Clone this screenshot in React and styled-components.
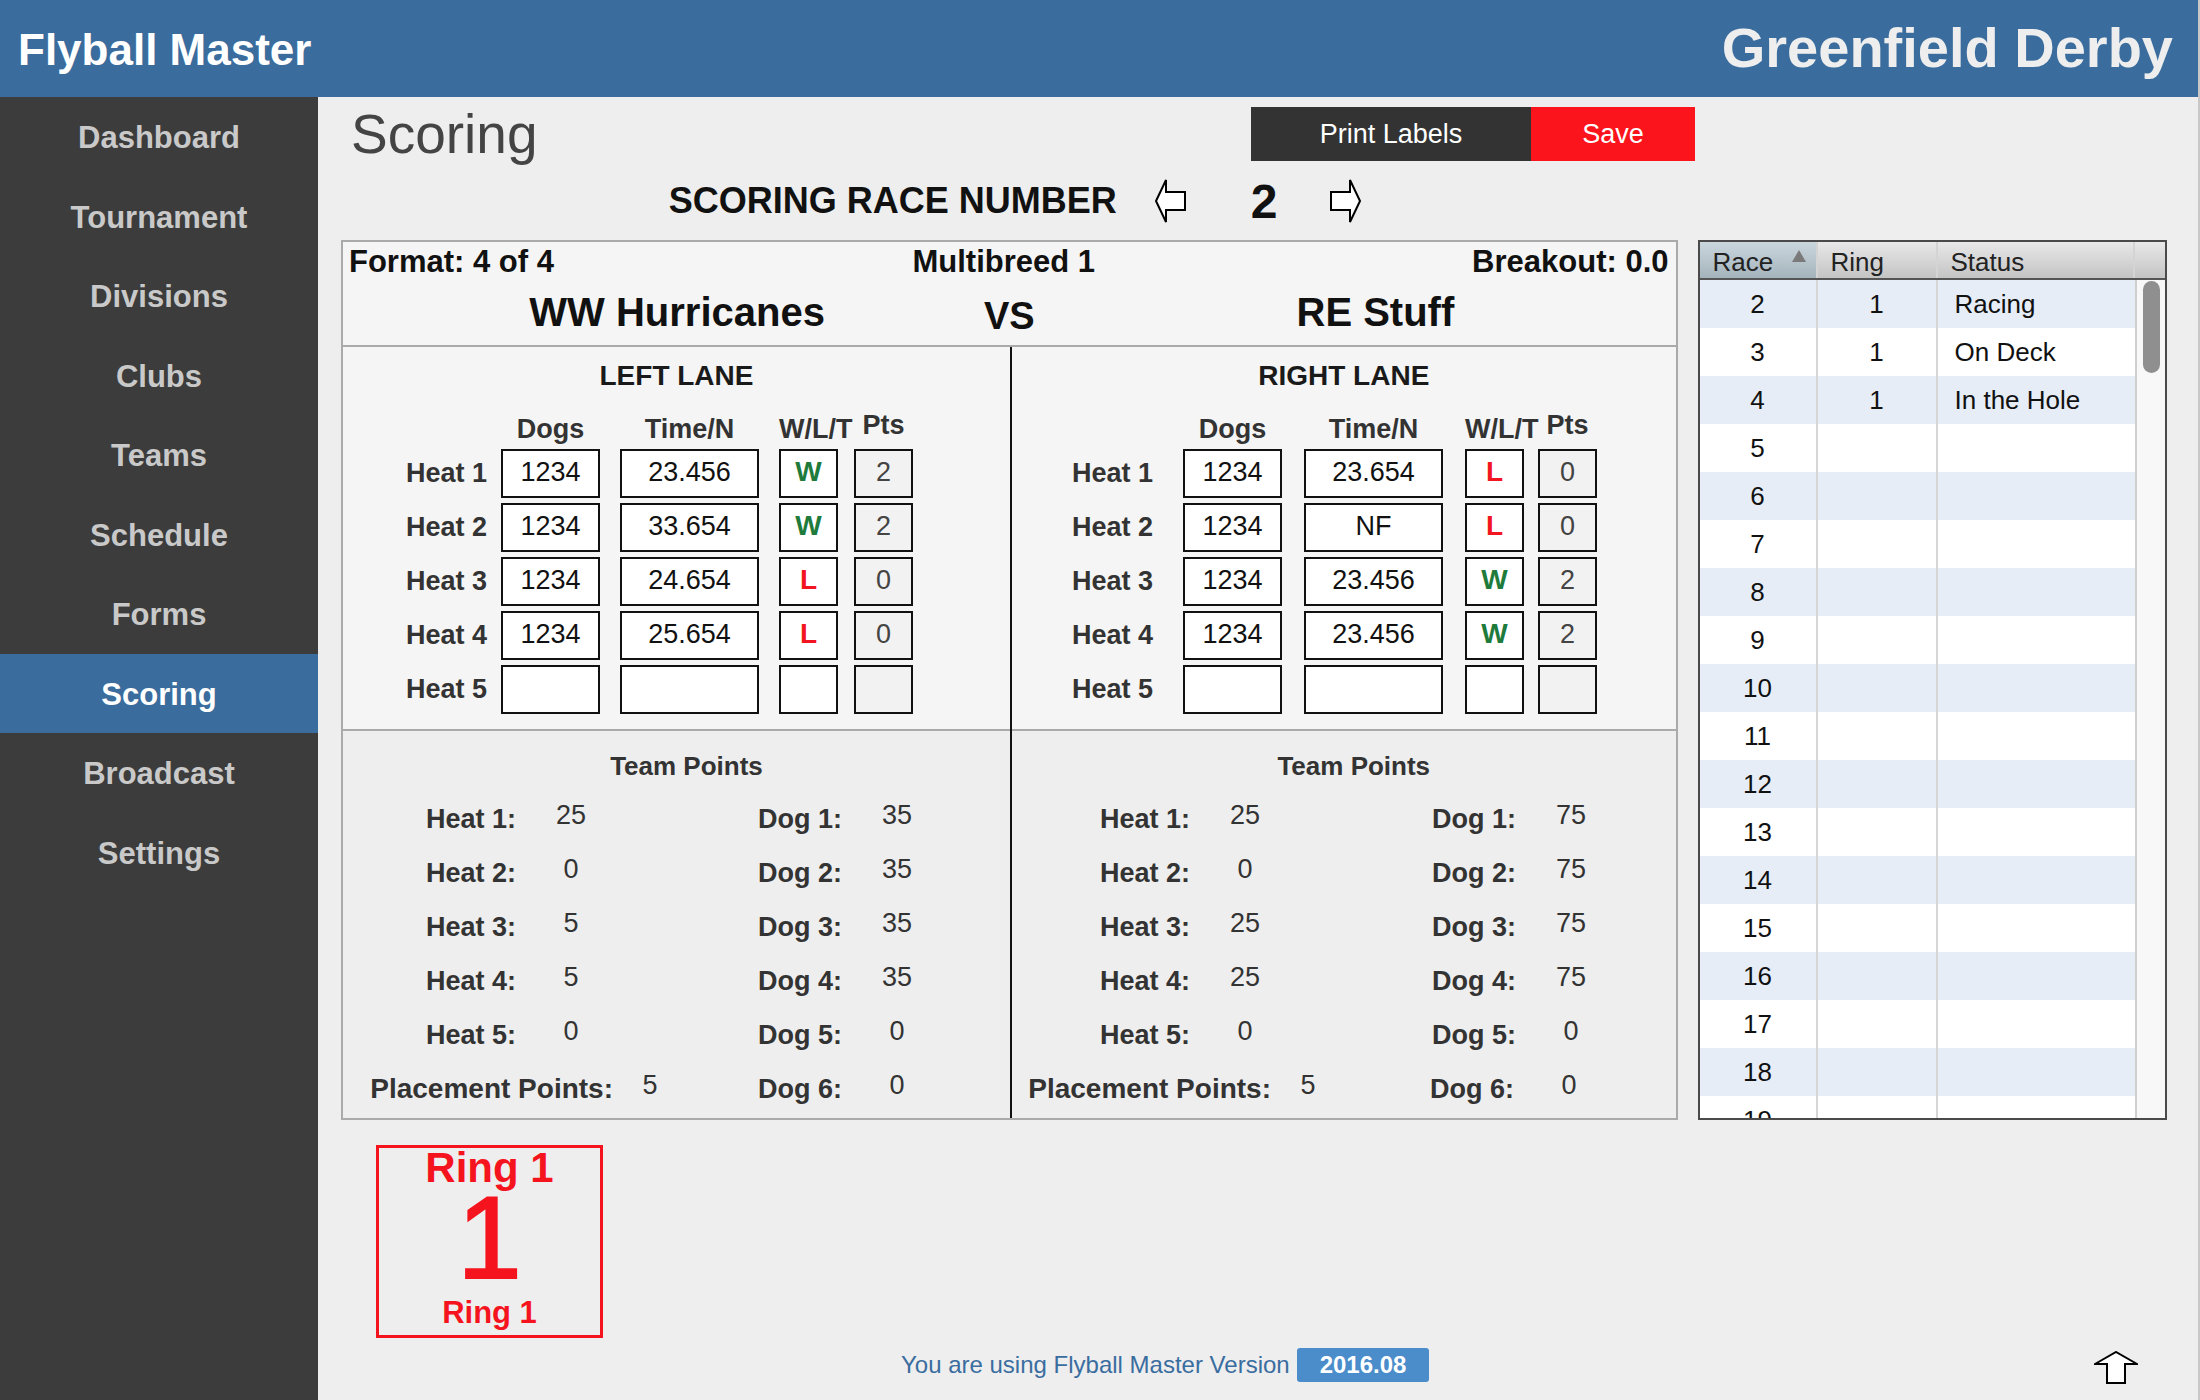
import React from "react";
import styled, { createGlobalStyle } from "styled-components";

const GlobalStyle = createGlobalStyle`
  html, body {
    margin: 0;
    padding: 0;
  }
  body {
    font-family: "Liberation Sans", Arial, Helvetica, sans-serif;
    background: #eeeeee;
  }
  * {
    box-sizing: border-box;
  }
`;

const NAV = [
  "Dashboard",
  "Tournament",
  "Divisions",
  "Clubs",
  "Teams",
  "Schedule",
  "Forms",
  "Scoring",
  "Broadcast",
  "Settings"
];

const LEFT_HEATS = [
  { dog: "1234", time: "23.456", mark: "W", pts: "2" },
  { dog: "1234", time: "33.654", mark: "W", pts: "2" },
  { dog: "1234", time: "24.654", mark: "L", pts: "0" },
  { dog: "1234", time: "25.654", mark: "L", pts: "0" },
  { dog: "", time: "", mark: "", pts: "" }
];

const RIGHT_HEATS = [
  { dog: "1234", time: "23.654", mark: "L", pts: "0" },
  { dog: "1234", time: "NF", mark: "L", pts: "0" },
  { dog: "1234", time: "23.456", mark: "W", pts: "2" },
  { dog: "1234", time: "23.456", mark: "W", pts: "2" },
  { dog: "", time: "", mark: "", pts: "" }
];

const LEFT_POINTS = {
  heats: ["25", "0", "5", "5", "0"],
  dogs: ["35", "35", "35", "35", "0", "0"],
  placement: "5"
};

const RIGHT_POINTS = {
  heats: ["25", "0", "25", "25", "0"],
  dogs: ["75", "75", "75", "75", "0", "0"],
  placement: "5"
};

// column layouts differ slightly between the two lanes
const LEFT_LAYOUT = {
  heatCols: "100px 14px 99px 20px 139px 20px 59px 16px 59px",
  pad: 44,
  pointCols: "173px 110px 216px 110px",
  placeCols: "270px 74px 155px 110px"
};

const RIGHT_LAYOUT = {
  heatCols: "100px 30px 99px 22px 139px 22px 59px 14px 59px",
  pad: 41,
  pointCols: "178px 110px 216px 110px",
  placeCols: "259px 74px 169px 110px"
};

const RACES = [
  { race: 2, ring: "1", status: "Racing" },
  { race: 3, ring: "1", status: "On Deck" },
  { race: 4, ring: "1", status: "In the Hole" },
  ...Array.from({ length: 15 }, (_, i) => ({ race: i + 5, ring: "", status: "" }))
];

const BlockArrow = ({ dir }) => {
  if (dir === "up") {
    return (
      <svg width="44" height="33" viewBox="0 0 44 33">
        <polygon
          points="1,13 22,1 43,13 31,13 31,32 13,32 13,13"
          fill="#fff"
          stroke="#000"
          strokeWidth="2"
        />
      </svg>
    );
  }
  const pts =
    dir === "left"
      ? "30,13 11,13 11,1 1,22 11,43 11,31 30,31"
      : "1,13 20,13 20,1 30,22 20,43 20,31 1,31";
  return (
    <svg width="31" height="44" viewBox="0 0 31 44">
      <polygon points={pts} fill="#fff" stroke="#000" strokeWidth="2" />
    </svg>
  );
};

const Lane = ({ title, heats, layout }) => (
  <LaneBox>
    <LaneTitle>{title}</LaneTitle>
    <HeatGrid $cols={layout.heatCols} $pad={layout.pad}>
      <span />
      <span />
      <ColHead>Dogs</ColHead>
      <span />
      <ColHead>Time/N</ColHead>
      <span />
      <ColHead>W/L/T</ColHead>
      <span />
      <ColHead $raise>Pts</ColHead>
      {heats.map((h, i) => (
        <React.Fragment key={i}>
          <HeatLabel>Heat {i + 1}</HeatLabel>
          <span />
          <Field>{h.dog}</Field>
          <span />
          <Field>{h.time}</Field>
          <span />
          <Field $mark={h.mark}>{h.mark}</Field>
          <span />
          <Field $muted>{h.pts}</Field>
        </React.Fragment>
      ))}
    </HeatGrid>
  </LaneBox>
);

const TeamPoints = ({ data, layout }) => (
  <PointsBox>
    <PointsTitle>Team Points</PointsTitle>
    {data.heats.map((v, i) => (
      <PointRow key={i} $cols={layout.pointCols}>
        <PointLabel>Heat {i + 1}:</PointLabel>
        <PointValue>{v}</PointValue>
        <PointLabel>Dog {i + 1}:</PointLabel>
        <PointValue>{data.dogs[i]}</PointValue>
      </PointRow>
    ))}
    <PointRow $cols={layout.placeCols}>
      <PointLabel $wide>Placement Points:</PointLabel>
      <PointValue>{data.placement}</PointValue>
      <PointLabel>Dog 6:</PointLabel>
      <PointValue>{data.dogs[5]}</PointValue>
    </PointRow>
  </PointsBox>
);

export default function App() {
  return (
    <>
      <GlobalStyle />
      <Shell>
        <TopBar>
          <Brand>Flyball Master</Brand>
          <EventName>Greenfield Derby</EventName>
        </TopBar>

        <Sidebar>
          {NAV.map(item => (
            <NavItem key={item} $active={item === "Scoring"}>
              {item}
            </NavItem>
          ))}
        </Sidebar>

        <Main>
          <TitleRow>
            <PageTitle>Scoring</PageTitle>
            <ActionBar>
              <ActionButton $w={280} $bg="#333333">
                Print Labels
              </ActionButton>
              <ActionButton $w={164} $bg="#fc141c">
                Save
              </ActionButton>
            </ActionBar>
          </TitleRow>

          <RaceNav>
            <RaceNavLabel>SCORING RACE NUMBER</RaceNavLabel>
            <BlockArrow dir="left" />
            <RaceNumber>2</RaceNumber>
            <BlockArrow dir="right" />
          </RaceNav>

          <Panels>
            <ScoreCard>
              <MatchInfo>
                <InfoRow>
                  <span>Format: 4 of 4</span>
                  <InfoCenter>Multibreed 1</InfoCenter>
                  <InfoRight>Breakout: 0.0</InfoRight>
                </InfoRow>
                <MatchNames>
                  <TeamName $pad={42}>WW Hurricanes</TeamName>
                  <Versus>VS</Versus>
                  <TeamName $pad={26}>RE Stuff</TeamName>
                </MatchNames>
              </MatchInfo>
              <LaneColumns>
                <LaneColumn $divider>
                  <Lane title="LEFT LANE" heats={LEFT_HEATS} layout={LEFT_LAYOUT} />
                  <TeamPoints data={LEFT_POINTS} layout={LEFT_LAYOUT} />
                </LaneColumn>
                <LaneColumn>
                  <Lane title="RIGHT LANE" heats={RIGHT_HEATS} layout={RIGHT_LAYOUT} />
                  <TeamPoints data={RIGHT_POINTS} layout={RIGHT_LAYOUT} />
                </LaneColumn>
              </LaneColumns>
            </ScoreCard>

            <RaceTable>
              <TableHead>
                <HeadCell $sorted>
                  Race
                  <SortMark />
                </HeadCell>
                <HeadCell>Ring</HeadCell>
                <HeadCell>Status</HeadCell>
                <HeadCell $last />
              </TableHead>
              <TableBody>
                <Rows>
                  {RACES.map((r, i) => (
                    <RaceRow key={r.race} $alt={i % 2 === 0}>
                      <Cell $center $line>
                        {r.race}
                      </Cell>
                      <Cell $center $line>
                        {r.ring}
                      </Cell>
                      <Cell>{r.status}</Cell>
                    </RaceRow>
                  ))}
                </Rows>
                <ScrollTrack>
                  <ScrollThumb />
                </ScrollTrack>
              </TableBody>
            </RaceTable>
          </Panels>

          <RingCard>
            <RingTitle>Ring 1</RingTitle>
            <RingBig>1</RingBig>
            <RingFoot>Ring 1</RingFoot>
          </RingCard>

          <Footer>
            <VersionText>You are using Flyball Master Version</VersionText>
            <VersionBadge>2016.08</VersionBadge>
            <BackToTop>
              <BlockArrow dir="up" />
            </BackToTop>
          </Footer>
        </Main>
      </Shell>
    </>
  );
}

const Shell = styled.div`
  width: 2200px;
  height: 1400px;
  overflow: hidden;
  display: grid;
  grid-template-columns: 318px 1fr;
  grid-template-rows: 97px 1fr;
  background: #eeeeee;
  border-right: 2px solid #c8c8c8;
`;

const TopBar = styled.header`
  grid-column: 1 / -1;
  background: #3a6c9d;
  display: flex;
  align-items: center;
  justify-content: space-between;
  padding: 0 25px 0 18px;
`;

const Brand = styled.div`
  color: #ffffff;
  font-size: 44px;
  font-weight: bold;
  margin-top: 2px;
`;

const EventName = styled.div`
  color: #eeeeee;
  font-size: 56px;
  font-weight: bold;
  margin-top: -2px;
`;

const Sidebar = styled.nav`
  background: #3c3c3c;
  display: flex;
  flex-direction: column;
`;

const NavItem = styled.div`
  height: 79.5px;
  flex-shrink: 0;
  display: flex;
  align-items: center;
  justify-content: center;
  padding-top: 3px;
  font-size: 31px;
  font-weight: bold;
  color: ${p => (p.$active ? "#ffffff" : "#c9c9c9")};
  background: ${p => (p.$active ? "#3a6c9d" : "transparent")};
`;

const Main = styled.main`
  padding: 10px 31px 0 23px;
  display: flex;
  flex-direction: column;
  min-width: 0;
`;

const TitleRow = styled.div`
  display: grid;
  grid-template-columns: 910px auto;
  align-items: center;
  height: 54px;
`;

const PageTitle = styled.h1`
  margin: 0;
  padding-left: 10px;
  font-size: 55px;
  line-height: 54px;
  font-weight: normal;
  color: #444444;
`;

const ActionBar = styled.div`
  display: flex;
`;

const ActionButton = styled.button`
  height: 54px;
  width: ${p => p.$w}px;
  border: 0;
  padding: 0;
  background: ${p => p.$bg};
  color: #ffffff;
  font-family: "Liberation Sans", Arial, sans-serif;
  font-size: 27px;
`;

const RaceNav = styled.div`
  width: 1338px;
  height: 46px;
  margin: 17px 0 16px;
  padding-left: 10px;
  display: flex;
  align-items: center;
  justify-content: center;
`;

const RaceNavLabel = styled.div`
  font-size: 36px;
  font-weight: bold;
  color: #111111;
  margin-right: 38px;
`;

const RaceNumber = styled.div`
  font-size: 48px;
  font-weight: bold;
  color: #111111;
  margin: 0 53px 0 65px;
`;

const Panels = styled.div`
  display: flex;
  gap: 20px;
  height: 880px;
  flex-shrink: 0;
`;

const ScoreCard = styled.section`
  width: 1338px;
  border: 2px solid #aaaaaa;
  background: #f5f5f5;
  display: flex;
  flex-direction: column;
  overflow: hidden;
`;

const MatchInfo = styled.div`
  height: 105px;
  flex-shrink: 0;
  border-bottom: 2px solid #aaaaaa;
  color: #111111;
  font-weight: bold;
`;

const InfoRow = styled.div`
  display: grid;
  grid-template-columns: 1fr auto 1fr;
  padding: 2px 7px 0 6px;
  font-size: 31px;
  line-height: 36px;
`;

const InfoCenter = styled.span`
  margin-right: 10px;
`;

const InfoRight = styled.span`
  text-align: right;
`;

const MatchNames = styled.div`
  display: grid;
  grid-template-columns: 1fr 80px 1fr;
  align-items: center;
  height: 65px;
  font-size: 40px;
`;

const TeamName = styled.div`
  text-align: center;
  padding-left: ${p => p.$pad}px;
`;

const Versus = styled.div`
  text-align: center;
  font-size: 38px;
  padding-top: 8px;
`;

const LaneColumns = styled.div`
  flex: 1;
  min-height: 0;
  display: grid;
  grid-template-columns: 669px 1fr;
`;

const LaneColumn = styled.div`
  display: flex;
  flex-direction: column;
  min-height: 0;
  ${p => p.$divider && "border-right: 2px solid #111111;"}
`;

const LaneBox = styled.div`
  height: 384px;
  flex-shrink: 0;
  padding: 13px 0 11px;
  border-bottom: 2px solid #aaaaaa;
  background: #f5f5f5;
`;

const LaneTitle = styled.div`
  text-align: center;
  font-size: 28px;
  line-height: 32px;
  font-weight: bold;
  color: #1a1a1a;
  margin-bottom: 22px;
`;

const HeatGrid = styled.div`
  display: grid;
  grid-template-columns: ${p => p.$cols};
  grid-template-rows: 30px repeat(5, 49px);
  row-gap: 5px;
  padding-left: ${p => p.$pad}px;
`;

const ColHead = styled.div`
  text-align: center;
  font-size: 27px;
  line-height: 30px;
  font-weight: bold;
  color: #333333;
  white-space: nowrap;
  margin-top: ${p => (p.$raise ? "-4px" : "0")};
`;

const HeatLabel = styled.div`
  align-self: center;
  text-align: right;
  font-size: 27px;
  font-weight: bold;
  color: #333333;
  white-space: nowrap;
`;

const markColor = mark => (mark === "W" ? "#1e7b3c" : mark === "L" ? "#f2141e" : "#111111");

const Field = styled.div`
  border: 2px solid #111111;
  background: ${p => (p.$muted ? "#f2f2f2" : "#ffffff")};
  display: flex;
  align-items: center;
  justify-content: center;
  padding-bottom: 3px;
  font-size: ${p => (p.$mark ? "28px" : "27px")};
  font-weight: ${p => (p.$mark ? "bold" : "normal")};
  color: ${p => (p.$muted ? "#444444" : markColor(p.$mark))};
`;

const PointsBox = styled.div`
  flex: 1;
  min-height: 0;
  background: #eeeeee;
  padding-top: 20px;
`;

const PointsTitle = styled.div`
  text-align: center;
  padding-left: 20px;
  font-size: 26px;
  line-height: 30px;
  font-weight: bold;
  color: #333333;
  margin-bottom: 11px;
`;

const PointRow = styled.div`
  display: grid;
  grid-template-columns: ${p => p.$cols};
  align-items: center;
  height: 54px;
`;

const PointLabel = styled.div`
  text-align: right;
  font-size: ${p => (p.$wide ? "28px" : "27px")};
  font-weight: bold;
  color: #333333;
  white-space: nowrap;
`;

const PointValue = styled.div`
  text-align: center;
  font-size: 27px;
  color: #333333;
  padding-bottom: 8px;
`;

const RaceTable = styled.section`
  width: 470px;
  border: 2px solid #4a4a4a;
  background: #ffffff;
  display: flex;
  flex-direction: column;
  overflow: hidden;
`;

const TableHead = styled.div`
  display: grid;
  grid-template-columns: 118px 120px 1fr 30px;
  height: 38px;
  flex-shrink: 0;
  border-bottom: 2px solid #555555;
`;

const HeadCell = styled.div`
  display: flex;
  align-items: flex-end;
  padding: 0 0 1px 13px;
  font-size: 26px;
  line-height: 30px;
  color: #222222;
  border-right: ${p => (p.$last ? "0" : "2px solid #d4d4d4")};
  background: ${p =>
    p.$sorted
      ? "linear-gradient(#cbd6dd, #a4b4bc)"
      : "linear-gradient(#e8e8e8, #c4c4c4)"};
`;

const SortMark = styled.span`
  width: 0;
  height: 0;
  margin: 0 10px 15px auto;
  border-left: 7px solid transparent;
  border-right: 7px solid transparent;
  border-bottom: 12px solid #7a7a7a;
`;

const TableBody = styled.div`
  flex: 1;
  display: flex;
  overflow: hidden;
`;

const Rows = styled.div`
  flex: 1;
  display: flex;
  flex-direction: column;
`;

const RaceRow = styled.div`
  display: grid;
  grid-template-columns: 118px 120px 1fr;
  height: 48px;
  flex-shrink: 0;
  background: ${p => (p.$alt ? "#e6edf7" : "#ffffff")};
`;

const Cell = styled.div`
  display: flex;
  align-items: center;
  justify-content: ${p => (p.$center ? "center" : "flex-start")};
  padding-left: ${p => (p.$center ? "0" : "17px")};
  font-size: 26px;
  color: #111111;
  border-right: ${p => (p.$line ? "2px solid #d6d6d6" : "0")};
`;

const ScrollTrack = styled.div`
  width: 30px;
  background: #f8f8f8;
  border-left: 2px solid #cfcfcf;
  padding: 1px 0 0 6px;
`;

const ScrollThumb = styled.div`
  width: 17px;
  height: 92px;
  border-radius: 9px;
  background: #8f8f8f;
`;

const RingCard = styled.div`
  width: 227px;
  height: 193px;
  flex-shrink: 0;
  margin: 25px 0 0 35px;
  border: 3px solid #f5141e;
  display: flex;
  flex-direction: column;
  align-items: center;
  color: #f5141e;
  font-weight: bold;
`;

const RingTitle = styled.div`
  font-size: 42px;
  line-height: 40px;
`;

const RingBig = styled.div`
  font-size: 116px;
  line-height: 100px;
  font-weight: normal;
  -webkit-text-stroke: 2px #f5141e;
`;

const RingFoot = styled.div`
  font-size: 31px;
  line-height: 36px;
  margin-top: 7px;
`;

const Footer = styled.footer`
  display: flex;
  align-items: center;
  height: 34px;
  flex-shrink: 0;
  margin-top: 10px;
  padding: 0 29px 0 560px;
`;

const VersionText = styled.span`
  font-size: 24px;
  color: #3a6d9f;
`;

const VersionBadge = styled.span`
  display: flex;
  align-items: center;
  height: 34px;
  margin-left: 7px;
  padding: 0 23px;
  border-radius: 3px;
  background: #4a8dca;
  color: #ffffff;
  font-size: 24px;
  font-weight: bold;
`;

const BackToTop = styled.div`
  margin-left: auto;
  display: flex;
  padding-top: 4px;
`;
